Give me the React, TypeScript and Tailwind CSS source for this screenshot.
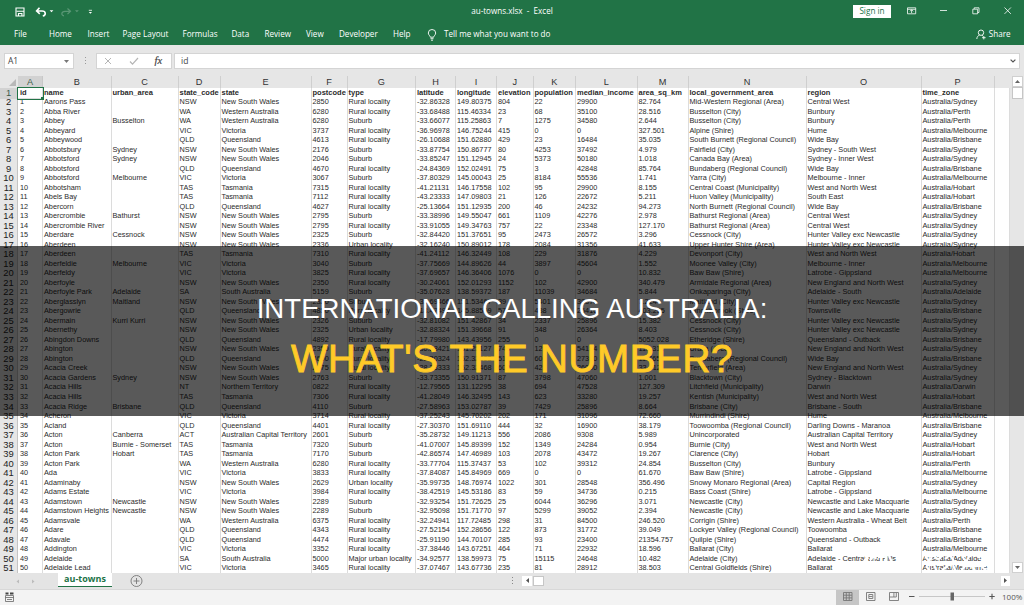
import clsx from 'clsx';

const GRID =
  'grid grid-cols-[18px_25px_68.5px_67px_42px_91px_36px_68.5px_40px_41px_36.5px_42.5px_61.5px_51px_118px_115px_73px_15px]';

const letters = ['A', 'B', 'C', 'D', 'E', 'F', 'G', 'H', 'I', 'J', 'K', 'L', 'M', 'N', 'O', 'P'];

const tabs = [
  { label: 'File', width: 'w-[35px]' },
  { label: 'Home', width: 'w-[38.5px]' },
  { label: 'Insert', width: 'w-[35px]' },
  { label: 'Page Layout', width: 'w-[60px]' },
  { label: 'Formulas', width: 'w-[49px]' },
  { label: 'Data', width: 'w-[33px]' },
  { label: 'Review', width: 'w-[41.5px]' },
  { label: 'View', width: 'w-[33px]' },
  { label: 'Developer', width: 'w-[54px]' },
  { label: 'Help', width: 'w-[34px]' },
];

const sheet = `id|name|urban_area|state_code|state|postcode|type|latitude|longitude|elevation|population|median_income|area_sq_km|local_government_area|region|time_zone
1|Aarons Pass||NSW|New South Wales|2850|Rural locality|-32.86328|149.80375|804|22|29900|82.764|Mid-Western Regional (Area)|Central West|Australia/Sydney
2|Abba River||WA|Western Australia|6280|Rural locality|-33.68488|115.46334|23|68|35100|28.516|Busselton (City)|Bunbury|Australia/Perth
3|Abbey|Busselton|WA|Western Australia|6280|Suburb|-33.66077|115.25863|7|1275|34580|2.644|Busselton (City)|Bunbury|Australia/Perth
4|Abbeyard||VIC|Victoria|3737|Rural locality|-36.96978|146.75244|415|0|0|327.501|Alpine (Shire)|Hume|Australia/Melbourne
5|Abbeywood||QLD|Queensland|4613|Rural locality|-26.10688|151.62880|429|23|16484|35.035|South Burnett (Regional Council)|Wide Bay|Australia/Brisbane
6|Abbotsbury|Sydney|NSW|New South Wales|2176|Suburb|-33.87754|150.86777|80|4253|37492|4.979|Fairfield (City)|Sydney - South West|Australia/Sydney
7|Abbotsford|Sydney|NSW|New South Wales|2046|Suburb|-33.85247|151.12945|24|5373|50180|1.018|Canada Bay (Area)|Sydney - Inner West|Australia/Sydney
8|Abbotsford||QLD|Queensland|4670|Rural locality|-24.84369|152.02491|75|3|42848|85.764|Bundaberg (Regional Council)|Wide Bay|Australia/Brisbane
9|Abbotsford|Melbourne|VIC|Victoria|3067|Suburb|-37.80329|145.00043|25|8184|55536|1.741|Yarra (City)|Melbourne - Inner|Australia/Melbourne
10|Abbotsham||TAS|Tasmania|7315|Rural locality|-41.21131|146.17558|102|95|29900|8.155|Central Coast (Municipality)|West and North West|Australia/Hobart
11|Abels Bay||TAS|Tasmania|7112|Rural locality|-43.23333|147.09803|21|126|22672|5.211|Huon Valley (Municipality)|South East|Australia/Hobart
12|Abercorn||QLD|Queensland|4627|Rural locality|-25.13664|151.12935|200|46|24232|94.273|North Burnett (Regional Council)|Wide Bay|Australia/Brisbane
13|Abercrombie|Bathurst|NSW|New South Wales|2795|Suburb|-33.38996|149.55047|661|1109|42276|2.978|Bathurst Regional (Area)|Central West|Australia/Sydney
14|Abercrombie River||NSW|New South Wales|2795|Rural locality|-33.91055|149.34763|757|22|23348|127.170|Bathurst Regional (Area)|Central West|Australia/Sydney
15|Aberdare|Cessnock|NSW|New South Wales|2325|Suburb|-32.84420|151.37651|95|2473|26572|3.296|Cessnock (City)|Hunter Valley exc Newcastle|Australia/Sydney
16|Aberdeen||NSW|New South Wales|2336|Urban locality|-32.16240|150.89012|178|2084|31356|41.633|Upper Hunter Shire (Area)|Hunter Valley exc Newcastle|Australia/Sydney
17|Aberdeen||TAS|Tasmania|7310|Rural locality|-41.24112|146.32449|108|229|31876|4.229|Devonport (City)|West and North West|Australia/Hobart
18|Aberfeldie|Melbourne|VIC|Victoria|3040|Suburb|-37.75669|144.89626|44|3897|45604|1.552|Moonee Valley (City)|Melbourne - Inner|Australia/Melbourne
19|Aberfeldy||VIC|Victoria|3825|Rural locality|-37.69657|146.36406|1076|0|0|10.832|Baw Baw (Shire)|Latrobe - Gippsland|Australia/Melbourne
20|Aberfoyle||NSW|New South Wales|2350|Rural locality|-30.24061|152.01293|1152|102|42900|340.479|Armidale Regional (Area)|New England and North West|Australia/Sydney
21|Aberfoyle Park|Adelaide|SA|South Australia|5159|Suburb|-35.07628|138.59372|187|11039|34684|5.844|Onkaparinga (City)|Adelaide - South|Australia/Adelaide
22|Aberglasslyn|Maitland|NSW|New South Wales|2320|Suburb|-32.69466|151.53467|39|5401|38376|7.224|Maitland (City)|Hunter Valley exc Newcastle|Australia/Sydney
23|Abergowrie||QLD|Queensland|4850|Rural locality|-18.47497|145.88559|57|438|26416|403.255|Hinchinbrook (Shire)|Townsville|Australia/Brisbane
24|Abermain|Kurri Kurri|NSW|New South Wales|2326|Suburb|-32.81082|151.42867|34|2337|25896|15.382|Cessnock (City)|Hunter Valley exc Newcastle|Australia/Sydney
25|Abernethy||NSW|New South Wales|2325|Urban locality|-32.88324|151.39668|91|348|26364|8.403|Cessnock (City)|Hunter Valley exc Newcastle|Australia/Sydney
26|Abingdon Downs||QLD|Queensland|4892|Rural locality|-17.79980|143.43956|255|0|0|5052.028|Etheridge (Shire)|Queensland - Outback|Australia/Brisbane
27|Abington||NSW|New South Wales|2350|Rural locality|-30.28421|151.25127|743|12|54184|115.311|Uralla (Area)|New England and North West|Australia/Sydney
28|Abington||QLD|Queensland|4660|Rural locality|-25.20324|152.32393|51|60|27300|11.765|Bundaberg (Regional Council)|Wide Bay|Australia/Brisbane
29|Acacia Creek||NSW|New South Wales|2475|Rural locality|-28.38333|152.32468|602|42|26000|33.812|Tenterfield (Area)|New England and North West|Australia/Sydney
30|Acacia Gardens|Sydney|NSW|New South Wales|2763|Suburb|-33.73355|150.91371|87|3798|47060|1.001|Blacktown (City)|Sydney - Blacktown|Australia/Sydney
31|Acacia Hills||NT|Northern Territory|0822|Rural locality|-12.79565|131.12295|38|694|47528|127.309|Litchfield (Municipality)|Darwin|Australia/Darwin
32|Acacia Hills||TAS|Tasmania|7306|Rural locality|-41.28049|146.32495|143|623|33280|19.257|Kentish (Municipality)|West and North West|Australia/Hobart
33|Acacia Ridge|Brisbane|QLD|Queensland|4110|Suburb|-27.58963|153.02787|39|7429|25896|8.664|Brisbane (City)|Brisbane - South|Australia/Brisbane
34|Acheron||VIC|Victoria|3714|Rural locality|-37.25243|145.70202|202|171|31096|72.660|Murrindindi (Shire)|Hume|Australia/Melbourne
35|Acland||QLD|Queensland|4401|Rural locality|-27.30370|151.69110|444|32|16900|38.179|Toowoomba (Regional Council)|Darling Downs - Maranoa|Australia/Brisbane
36|Acton|Canberra|ACT|Australian Capital Territory|2601|Suburb|-35.28732|149.11213|556|2086|9308|5.989|Unincorporated|Australian Capital Territory|Australia/Sydney
37|Acton|Burnie - Somerset|TAS|Tasmania|7320|Suburb|-41.07007|145.89399|152|1349|24284|0.954|Burnie (City)|West and North West|Australia/Hobart
38|Acton Park|Hobart|TAS|Tasmania|7170|Suburb|-42.86574|147.46989|103|2078|43472|19.267|Clarence (City)|Hobart|Australia/Hobart
39|Acton Park||WA|Western Australia|6280|Rural locality|-33.77704|115.37437|53|102|39312|24.854|Busselton (City)|Bunbury|Australia/Perth
40|Ada||VIC|Victoria|3833|Rural locality|-37.84087|145.84969|669|0|0|61.670|Baw Baw (Shire)|Latrobe - Gippsland|Australia/Melbourne
41|Adaminaby||NSW|New South Wales|2629|Urban locality|-35.99735|148.76974|1022|301|28548|356.496|Snowy Monaro Regional (Area)|Capital Region|Australia/Sydney
42|Adams Estate||VIC|Victoria|3984|Rural locality|-38.42519|145.53186|83|59|34736|0.215|Bass Coast (Shire)|Latrobe - Gippsland|Australia/Melbourne
43|Adamstown|Newcastle|NSW|New South Wales|2289|Suburb|-32.93254|151.72625|25|6044|36296|3.071|Newcastle (City)|Newcastle and Lake Macquarie|Australia/Sydney
44|Adamstown Heights|Newcastle|NSW|New South Wales|2289|Suburb|-32.95098|151.71770|97|5299|39052|2.394|Newcastle (City)|Newcastle and Lake Macquarie|Australia/Sydney
45|Adamsvale||WA|Western Australia|6375|Rural locality|-32.24941|117.72485|298|31|84500|246.520|Corrigin (Shire)|Western Australia - Wheat Belt|Australia/Perth
46|Adare||QLD|Queensland|4343|Rural locality|-27.52154|152.28656|122|873|31772|39.049|Lockyer Valley (Regional Council)|Toowoomba|Australia/Brisbane
47|Adavale||QLD|Queensland|4474|Rural locality|-25.91190|144.70107|285|93|23400|21354.757|Quilpie (Shire)|Queensland - Outback|Australia/Brisbane
48|Addington||VIC|Victoria|3352|Rural locality|-37.38446|143.67251|464|71|22932|18.596|Ballarat (City)|Ballarat|Australia/Melbourne
49|Adelaide||SA|South Australia|5000|Major urban locality|-34.92577|138.59973|75|15115|24648|10.482|Adelaide (City)|Adelaide - Central and Hills|Australia/Adelaide
50|Adelaide Lead||VIC|Victoria|3465|Rural locality|-37.07467|143.67736|235|81|28912|38.503|Central Goldfields (Shire)|Ballarat|Australia/Melbourne`;

const rows = sheet.split('\n').map((line) => line.split('|'));

function TitleBar() {
  return (
    <div className="grid h-[23px] grid-cols-[1fr_auto_1fr] items-center text-white">
      {/* Quick access */}
      <svg className="h-[23px] w-[110px]" viewBox="0 0 110 23" fill="none" stroke="currentColor">
        <path d="M16 8h8v8h-8z" strokeWidth="1.1" />
        <path d="M16.5 11.2h7.5M18.5 16v-2.5h3.4V16" strokeWidth="1.1" />
        <path d="M39.5 7.8 36.6 11l3.2 2.8M37 11h5c4.2 0 4.2 4.2.8 5" strokeWidth="1.6" />
        <path d="M49.6 10.3h3.8l-1.9 2z" fill="currentColor" stroke="none" />
        <g opacity="0.25">
          <path d="m67.5 8.5 3 2.8-3 2.8M70 11.3h-5c-4 0-4 4-1 4.5" strokeWidth="1.2" />
          <path d="M75 10.3h3.8l-1.9 2z" fill="currentColor" stroke="none" />
        </g>
        <path d="M88.8 10.3h3.2" strokeWidth="0.8" />
        <path d="M88.8 12h3.2l-1.6 1.8z" fill="currentColor" stroke="none" />
      </svg>
      <span className="text-[8.1px]">au-towns.xlsx&nbsp; -&nbsp; Excel</span>
      <div className="flex items-center justify-end">
        <div className="flex h-[13px] w-[38px] items-center justify-center bg-white text-[8.2px] text-[#217346]">
          Sign in
        </div>
        <svg className="h-[23px] w-[133px]" viewBox="891 0 133 23" fill="none" stroke="currentColor" strokeWidth="0.8">
          <path d="M907.5 7.8h8.2v6h-8.2zM907.5 9.3h8.2M911.6 13v-3M910 11.3l1.6-1.6 1.6 1.6" />
          <path d="M940 10.5h7" />
          <path d="M972.8 9.2h4.8v4.6h-4.8zM974.2 9V7.8h4.8v4.7h-1.2" />
          <path d="m1004.5 7.5 6.4 6.4M1010.9 7.5l-6.4 6.4" />
        </svg>
      </div>
    </div>
  );
}

function RibbonTabs() {
  return (
    <div className="flex h-[22px] items-center pt-px pl-[14px] text-[8.1px] text-white">
      {tabs.map((tab) => (
        <span key={tab.label} className={clsx('shrink-0 whitespace-nowrap', tab.width)}>
          {tab.label}
        </span>
      ))}
      <svg className="mr-[7px] h-3 w-[10px]" viewBox="0 0 10 12" fill="none" stroke="currentColor" strokeWidth="0.9">
        <path d="M3.3 8.2C3.3 6.8 1.3 6 1.3 4a3.7 3.5 0 0 1 7.4 0c0 2-2 2.8-2 4.2zM3.5 9.7h3M4 11.2h2" />
      </svg>
      <span className="whitespace-nowrap">Tell me what you want to do</span>
      <div className="ml-auto flex items-center gap-[3px] pr-[13.5px]">
        <svg className="h-[11px] w-[10px]" viewBox="0 0 10 11" fill="none" stroke="currentColor" strokeWidth="0.9">
          <circle cx="5" cy="3.7" r="2.7" />
          <path d="M.8 10c.2-2.4 1.4-3.4 2.7-3.9M6 6.3l1 .7M7.8 7v3.4M6.1 8.7h3.5" />
        </svg>
        Share
      </div>
    </div>
  );
}

function FormulaBar() {
  return (
    <div className="flex h-[31px] pt-[7.5px] pr-[4px] pl-[4px] text-[8.5px] text-[#444]">
      <div className="flex h-[16px] w-[70px] items-center justify-between border border-[#d4d4d4] bg-white pt-px pr-[4px] pl-[3px]">
        A1
        <svg className="h-[3px] w-[5px]" viewBox="0 0 5 3">
          <path d="M0 0h5L2.5 3z" fill="#777" />
        </svg>
      </div>
      <div className="flex h-[16px] w-[22px] flex-col items-center justify-center gap-[2px]">
        <i className="size-px bg-[#999]" />
        <i className="size-px bg-[#999]" />
        <i className="size-px bg-[#999]" />
      </div>
      <div className="h-[16px] w-[76px] border border-[#d4d4d4] bg-white">
        <svg className="h-[14px] w-[74px]" viewBox="0 0 74 14" fill="none">
          <path d="m8 4 6 6M14 4l-6 6" stroke="#b5b5b5" />
          <path d="m33 7.5 2.5 2.7L41 4" stroke="#b5b5b5" strokeWidth="1.2" />
          <text x="57.5" y="10" className="font-['Liberation_Serif'] text-[10.5px] italic" fill="#444" stroke="#444" strokeWidth="0.2">
            fx
          </text>
        </svg>
      </div>
      <div className="ml-[2px] flex h-[16px] flex-1 items-center justify-between border border-[#d4d4d4] bg-white pt-px pr-[3px] pl-[6px]">
        id
        <svg className="h-[4px] w-[6px]" viewBox="0 0 6 4" fill="none">
          <path d="m.6.6 2.4 2.4L5.4.6" stroke="#555" strokeWidth="1.2" />
        </svg>
      </div>
    </div>
  );
}

function Sheet() {
  return (
    <div className="flex h-[496.5px] overflow-hidden font-['Liberation_Sans',sans-serif]">
      <div className="w-[1009px] shrink-0">
        <div className={clsx(GRID, 'h-[11.5px] text-[9.2px] leading-[12px] text-[#333]')}>
          <div className="flex items-end justify-end pr-[2px] pb-[2px]">
            <svg className="size-[7px]" viewBox="0 0 7 7">
              <path d="M7 0v7H0z" fill="#b8b8b8" />
            </svg>
          </div>
          {letters.map((letter) => (
            <div
              key={letter}
              className={clsx(
                'border-r text-center',
                letter === 'A' ? 'border-[#c8c8c8] bg-[#d2d2d2] text-[#3c5a4a]' : 'border-[#cfcfcf]',
              )}
            >
              {letter}
            </div>
          ))}
        </div>
        {rows.map((row, r) => (
          <div key={r} className={clsx(GRID, 'h-[9.524px]')}>
            <div
              className={clsx(
                'border-r border-[#c4c4c4] text-center text-[9.4px] leading-[9.8px]',
                r === 0 ? 'bg-[#d2d2d2] text-[#3c5a4a]' : 'text-[#222]',
              )}
            >
              {r + 1}
            </div>
            {row.map((cell, c) => (
              <div
                key={c}
                className={clsx(
                  'overflow-visible border-r border-b border-[#dcdcdc] bg-white leading-[10.6px] whitespace-nowrap text-[#2b2b2b]',
                  c === 0 ? 'pl-[2px]' : 'pl-[1px]',
                  r === 0 ? 'text-[7.5px] font-bold' : 'text-[7.3px]',
                  r === 0 && c === 0 && 'relative outline outline-[#217346]',
                )}
              >
                {cell}
                {r === 0 && c === 0 && <i className="absolute -right-[2px] -bottom-[2px] size-[3px] bg-[#217346]" />}
              </div>
            ))}
            <div className="border-r border-b border-[#dcdcdc] bg-white" />
          </div>
        ))}
      </div>
      {/* Vertical scrollbar */}
      <div className="flex flex-1 flex-col items-center pr-px pl-[2px]">
        <div className="flex h-[11px] w-[11px] items-center justify-center border border-[#d0d0d0] bg-white">
          <svg className="h-[3px] w-[5px]" viewBox="0 0 5 3">
            <path d="M0 3h5L2.5 0z" fill="#666" />
          </svg>
        </div>
        <div className="h-[12px] w-[11px] border border-[#c6c6c6] bg-white" />
        <div className="mt-auto flex h-[11px] w-[11px] items-center justify-center border border-[#d0d0d0] bg-white">
          <svg className="h-[3px] w-[5px]" viewBox="0 0 5 3">
            <path d="M0 0h5L2.5 3z" fill="#666" />
          </svg>
        </div>
      </div>
    </div>
  );
}

function SheetTabs() {
  return (
    <div className="flex h-[17.5px] border-b border-[#d8d8d8] bg-[#e4e4e4]">
      <svg className="h-[16px] w-[58px]" viewBox="0 0 58 16">
        <path d="M19 6.5v4L16.5 8.5zM32 6.5v4l2.5-2z" fill="#bcbcbc" />
      </svg>
      <div className="h-[14px] w-[54px] border-b-[1.5px] border-[#217346] bg-white text-center text-[9px] leading-[12px] font-bold text-[#217346]">
        au-towns
      </div>
      <svg className="ml-[18px] h-[16px] w-[13px]" viewBox="0 0 13 16" fill="none" stroke="#777" strokeWidth="0.9">
        <circle cx="6.5" cy="8" r="5.5" />
        <path d="M3.5 8h6M6.5 5v6" />
      </svg>
      <div className="ml-[369px] flex h-[16px] w-[10px] flex-col justify-center gap-[2px]">
        <i className="size-px bg-[#888]" />
        <i className="size-px bg-[#888]" />
        <i className="size-px bg-[#888]" />
      </div>
      <div className="mt-[3px] flex h-[10px] w-[10px] items-center justify-center bg-white">
        <svg className="h-[5px] w-[3px]" viewBox="0 0 3 5">
          <path d="M3 0v5L0 2.5z" fill="#555" />
        </svg>
      </div>
      <div className="mt-[3px] ml-px h-[10px] w-[11px] border border-[#c6c6c6] bg-white" />
      <div className="mt-[3px] mr-[14px] ml-auto flex h-[10px] w-[9px] items-center justify-center bg-white">
        <svg className="h-[5px] w-[3px]" viewBox="0 0 3 5">
          <path d="M0 0v5l3-2.5z" fill="#555" />
        </svg>
      </div>
    </div>
  );
}

function StatusBar() {
  return (
    <div className="flex h-[15px] items-start bg-[#f3f3f3] text-[8px] text-[#555]">
      <svg className="mt-[1.5px] ml-[5px] h-[10px] w-[9px]" viewBox="0 0 9 10" fill="none" stroke="#666" strokeWidth="0.8">
        <path d="M.5 3.5h8v6h-8zM.5 5.5h8M2 7.5h5" />
        <path d="M.5 1.5h3M5 1.5h3.500" strokeWidth="1.8" stroke="#444" />
      </svg>
      <svg className="ml-auto h-[15px] w-[164px]" viewBox="836 590 164 15" fill="none" stroke="#777" strokeWidth="0.9">
        <path d="M836 590h23v15h-23z" fill="#c6c6c6" stroke="none" />
        <path d="M843.5 592.5h8.5v8h-8.5zM846.3 592.5v8M849.2 592.5v8M843.5 595.2h8.500M843.5 597.900h8.500" />
        <path d="M866.5 592.5h8.5v8h-8.5zM868.8 594.5h4v4h-4zM869 596.5h3.500" />
        <path d="M889.5 592.5h9v8h-9zM893.900 592.5v4.500M889.5 597h4.400M896.300 592.5v4.500h-2.400" />
        <path d="M909 596.5h5.500M989.300 596.5h5.400M992 593.800v5.400" stroke="#555" strokeWidth="1.1" />
        <path d="M919 596.5h66" stroke="#bbb" strokeWidth="0.8" />
        <path d="M950.5 592.5h3.500v8h-3.500z" fill="#666" stroke="none" />
      </svg>
      <span className="w-[24px] pl-[2px] leading-[13px] whitespace-nowrap">100%</span>
    </div>
  );
}

export default function App() {
  return (
    <div className="relative h-[605px] w-[1024px] overflow-hidden bg-[#e6e6e6] font-['Open_Sans',sans-serif]">
      <header className="h-[45px] bg-[#217346]">
        <TitleBar />
        <RibbonTabs />
      </header>
      <FormulaBar />
      <Sheet />
      <SheetTabs />
      <StatusBar />

      {/* Faint white mark over the last rows */}
      <svg
        className="absolute top-[553px] left-[858px] h-[20px] w-[136px]"
        viewBox="0 0 136 20"
        fill="none"
        stroke="#fff"
        strokeWidth="2.2"
      >
        <path d="M4 3c4-2 6 2 3 4s2 5 5 2M13 1v5q3-4 5 0M20 4h6M28 1v9M31 3l3 6" />
        <path d="M67 3l4 5 3-4M76 2q4 8 8 0M87 6l5-4 4 6M104 3l4 6 4-7M118 2l4 3M65 9h20l4 3 9-2 8 3h22" />
        <path d="M68 13l4 5M76 12l3 7M84 17l6-4M95 12l3 7M107 13l-4 5M113 12l5 7M124 14l5 4M65 19h58" />
      </svg>

      {/* Caption */}
      <div className="absolute top-[246px] left-0 flex h-[170px] w-full flex-col items-center bg-black/65 pt-[46px] font-['Liberation_Sans',sans-serif] whitespace-nowrap">
        <div className="text-[27.6px] leading-[34px] text-white">INTERNATIONAL CALLING AUSTRALIA:</div>
        <div className="mt-[12px] text-[38.5px] leading-[42px] tracking-[0.7px] text-[#ffca28] [-webkit-text-stroke:0.9px_#ffca28]">
          WHAT'S THE NUMBER?
        </div>
      </div>
    </div>
  );
}
